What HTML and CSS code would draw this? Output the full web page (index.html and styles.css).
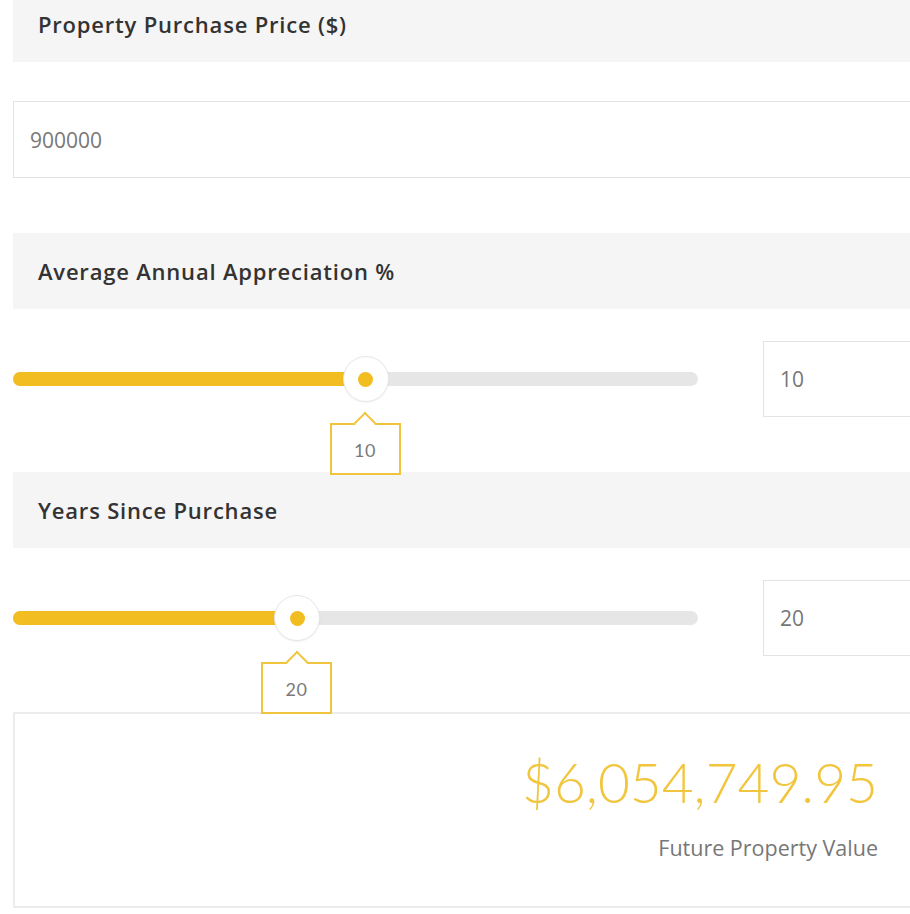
FILE: index.html
```html
<!DOCTYPE html>
<html>
<head>
<meta charset="utf-8">
<link rel="stylesheet" href="styles.css">
</head>
<body>
<div class="form">
  <div class="section-head">Property Purchase Price ($)</div>
  <div class="text-field">900000</div>

  <div class="section-head gap-top">Average Annual Appreciation %</div>
  <div class="slider-row">
    <div class="slider">
      <div class="track"></div>
      <div class="fill" style="width: calc(50% + 10px)"></div>
      <div class="handle" style="left: calc(50% + 10px)"><span class="dot"></span></div>
      <div class="tip" style="left: calc(50% + 10px)">10</div>
    </div>
    <div class="num-field">10</div>
  </div>

  <div class="section-head gap-top">Years Since Purchase</div>
  <div class="slider-row">
    <div class="slider">
      <div class="track"></div>
      <div class="fill" style="width: calc(40% + 10px)"></div>
      <div class="handle" style="left: calc(40% + 10px)"><span class="dot"></span></div>
      <div class="tip" style="left: calc(40% + 10px)">20</div>
    </div>
    <div class="num-field">20</div>
  </div>

  <div class="result">
    <div class="amount">$6,054,749.95</div>
    <div class="label">Future Property Value</div>
  </div>
</div>
</body>
</html>
```
FILE: styles.css
```css
html, body {
  margin: 0;
  padding: 0;
  background: #ffffff;
  overflow: hidden;
}
body {
  width: 910px;
  height: 914px;
  font-family: "Open Sans", "Liberation Sans", sans-serif;
}
.form {
  margin-top: -14px;
  margin-left: 13px;
  width: 900px;
  display: flex;
  flex-direction: column;
}
.section-head {
  height: 76px;
  background: #f5f5f5;
  padding-left: 25px;
  display: flex;
  align-items: center;
  font-size: 22px;
  font-weight: 600;
  letter-spacing: 0.8px;
  color: #333333;
  box-sizing: border-box;
}
.gap-top {
  margin-top: 55px;
}
.text-field {
  margin-top: 39px;
  height: 77px;
  box-sizing: border-box;
  border: 1px solid #e3e3e3;
  padding-left: 16px;
  display: flex;
  align-items: center;
  font-size: 21px;
  color: #777777;
}
.slider-row {
  margin-top: 32px;
  height: 76px;
  display: flex;
  align-items: center;
  gap: 65px;
}
.slider {
  position: relative;
  width: 685px;
  height: 76px;
  flex: none;
}
.track {
  position: absolute;
  left: 0;
  right: 0;
  top: 31px;
  height: 14px;
  border-radius: 7px;
  background: #e6e6e6;
}
.fill {
  position: absolute;
  left: 0;
  top: 31px;
  height: 14px;
  border-radius: 7px 0 0 7px;
  background: #f2bd21;
}
.handle {
  position: absolute;
  top: 15px;
  width: 46px;
  height: 46px;
  margin-left: -23px;
  box-sizing: border-box;
  border-radius: 50%;
  background: #ffffff;
  border: 1px solid #e6e6e6;
  box-shadow: 0 1px 2px rgba(0, 0, 0, 0.05);
  display: flex;
  align-items: center;
  justify-content: center;
}
.dot {
  width: 15px;
  height: 15px;
  border-radius: 50%;
  background: #f2bd21;
}
.tip {
  position: absolute;
  top: 82px;
  width: 71px;
  height: 52px;
  margin-left: -36px;
  box-sizing: border-box;
  border: 2px solid #f0c43c;
  background: #ffffff;
  display: flex;
  align-items: center;
  justify-content: center;
  font-family: Lato, "Open Sans", sans-serif;
  font-size: 18px;
  letter-spacing: 0.5px;
  color: #7a7a7a;
  padding-top: 1px;
  z-index: 2;
}
.tip::before {
  content: "";
  position: absolute;
  top: -10px;
  left: 50%;
  width: 14px;
  height: 14px;
  margin-left: -8px;
  background: #ffffff;
  border-top: 2px solid #f0c43c;
  border-left: 2px solid #f0c43c;
  transform: rotate(45deg);
}
.num-field {
  flex: 1;
  height: 76px;
  box-sizing: border-box;
  border: 1px solid #e3e3e3;
  padding-left: 16px;
  display: flex;
  align-items: center;
  font-size: 21px;
  color: #777777;
}
.result {
  margin-top: 56px;
  height: 196px;
  box-sizing: border-box;
  border: 2px solid #ececec;
  padding-top: 41px;
  padding-right: 33px;
  text-align: right;
}
.amount {
  font-family: Lato, sans-serif;
  font-weight: 300;
  font-size: 55px;
  line-height: 55px;
  color: #f1c53e;
}
.label {
  margin-top: 24px;
  font-size: 21.5px;
  line-height: 28px;
  color: #777777;
}
```
